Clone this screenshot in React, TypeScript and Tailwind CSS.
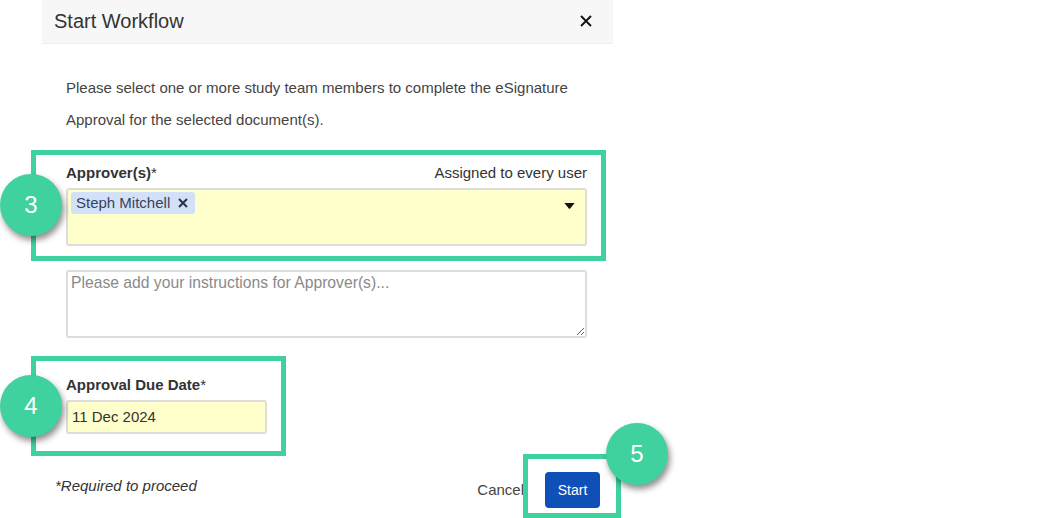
export default function App() {
  return (
    <div className="relative w-[1042px] h-[518px] overflow-hidden bg-white text-[#333] font-['Liberation_Sans',Arial,sans-serif]">
      <div className="ml-[42px] w-[571px]">
        <header className="flex h-[44px] items-center justify-between border-b border-[#eeeeee] bg-[#f7f7f7] pb-[1px] pl-[12px] pr-[21px]">
          <h1 className="text-[20px] leading-[42px] text-[#333]">Start Workflow</h1>
          <svg width="12" height="12" viewBox="0 0 12 12" fill="none" stroke="#111" strokeWidth="1.9">
            <path d="M1 1 L11 11 M11 1 L1 11" />
          </svg>
        </header>

        <div className="pl-[24px] pr-[26px] pt-[28px]">
          <p className="text-[15px] leading-[32px] text-[#444]">
            Please select one or more study team members to complete the eSignature
            <br />
            Approval for the selected document(s).
          </p>

          <div className="mt-[27px] flex h-[20px] items-center justify-between text-[15px]">
            <span>
              <b className="font-bold">Approver(s)</b>*
            </span>
            <span>Assigned to every user</span>
          </div>
          <div className="mt-[5px] flex h-[58px] items-start justify-between rounded-[3px] border-2 border-[#dddddd] bg-[#ffffcc] pl-[3px] pr-[10px] pt-[2px]">
            <div className="flex h-[22px] w-[124px] items-center rounded-[3px] bg-[#d3e1f8] pl-[5px] text-[15px] text-[#36425c]">
              Steph Mitchell
              <svg width="10" height="10" viewBox="0 0 10 10" className="ml-[8px]" fill="none" stroke="#27304a" strokeWidth="2">
                <path d="M1 1 L9 9 M9 1 L1 9" />
              </svg>
            </div>
            <svg width="11" height="6" viewBox="0 0 12 7" className="mt-[11px]" fill="#111">
              <path d="M0 0 H12 L6.8 6.4 Q6 7 5.2 6.4 Z" />
            </svg>
          </div>

          <textarea
            className="mt-[24px] block h-[68px] w-full rounded-[3px] border-2 border-[#dddddd] bg-white px-[3px] pt-[1px] text-[15.7px] leading-[20px] placeholder:text-[#8a8a8a]"
            placeholder="Please add your instructions for Approver(s)..."
          />

          <div className="mt-[37px] h-[20px] text-[15px] leading-[20px]">
            <b className="font-bold">Approval Due Date</b>*
          </div>
          <div className="mt-[5px] flex h-[34px] w-[201px] items-center rounded-[3px] border-2 border-[#dddddd] bg-[#ffffcc] pl-[4px] text-[15px]">
            11 Dec 2024
          </div>
        </div>

        <footer className="mt-[38px] flex items-start pl-[13px] pr-[13px]">
          <span className="mt-[5px] text-[15px] italic leading-[18px] text-[#333]">*Required to proceed</span>
          <span className="ml-auto mt-[9px] text-[15px] leading-[18px] text-[#444]">Cancel</span>
          <button className="ml-[21px] h-[36px] w-[55px] rounded-[4px] bg-[#0f4fb8] text-[14px] font-medium text-white">
            Start
          </button>
        </footer>
      </div>

      <div className="absolute left-[31px] top-[150px] h-[111px] w-[575px] border-[5px] border-[#3fd19e]" />
      <div className="absolute left-[31px] top-[356px] h-[100px] w-[255px] border-[5px] border-[#3fd19e]" />
      <div className="absolute left-[523px] top-[454px] h-[64px] w-[98px] border-[5px] border-[#3fd19e]" />

      <div className="absolute left-0 top-[174px] flex h-[62px] w-[62px] items-center justify-center rounded-full bg-[#3fd19e] text-[24px] text-white shadow-[2px_4px_6px_rgba(0,0,0,0.45)]">3</div>
      <div className="absolute left-0 top-[375px] flex h-[62px] w-[62px] items-center justify-center rounded-full bg-[#3fd19e] text-[24px] text-white shadow-[2px_4px_6px_rgba(0,0,0,0.45)]">4</div>
      <div className="absolute left-[606px] top-[423px] flex h-[62px] w-[62px] items-center justify-center rounded-full bg-[#3fd19e] text-[24px] text-white shadow-[2px_4px_6px_rgba(0,0,0,0.45)]">5</div>
    </div>
  );
}
